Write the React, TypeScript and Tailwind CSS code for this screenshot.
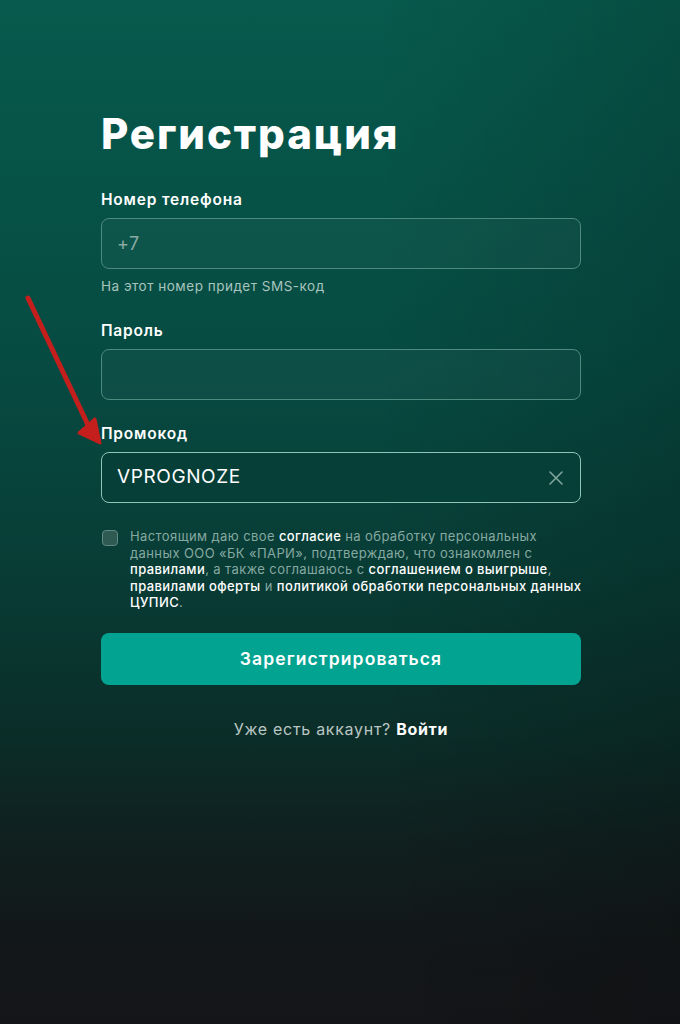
import React, { useState } from "react";

const font = { fontFamily: "Inter, 'Noto Sans', sans-serif" };

const Field = ({
    label,
    children,
    active,
}: {
    label: string;
    children?: React.ReactNode;
    active?: boolean;
}) => (
    <div className="flex flex-col">
        <p className="text-[15.5px] font-semibold text-white leading-[20px] tracking-[0.8px] mb-[8px]">{label}</p>
        <div
            className={`h-[51px] rounded-[8px] border flex items-center px-[15px] ${
                active ? "border-[#8fc4b8] bg-[#063e38]" : "border-[#4f8a7e] bg-white/[0.03]"
            }`}
        >
            {children}
        </div>
    </div>
);

const B = ({ children }: { children: React.ReactNode }) => (
    <span className="text-white font-medium">{children}</span>
);

export default function App() {
    const [checked, setChecked] = useState(false);

    return (
        <div
            className="relative w-[680px] h-[1024px] overflow-hidden bg-[linear-gradient(180deg,#075a4d_0%,#064b42_35%,#083d36_55%,#0b2d28_72%,#10201f_82%,#131719_92%,#141518_100%)]"
            style={font}
        >
            <div className="absolute inset-0 bg-[linear-gradient(90deg,rgba(0,0,0,0)_0%,rgba(0,0,0,0)_55%,rgba(0,0,0,0.15)_100%)]" />

            <div className="relative w-[480px] ml-[101px] pt-[108px] flex flex-col">
                <h1 className="text-[42px] font-extrabold text-white leading-[52px] tracking-[1.9px] mb-[30px]">
                    Регистрация
                </h1>

                <Field label="Номер телефона">
                    <span className="text-[18px] text-[#8aa9a2] tracking-[0.5px]">+7</span>
                </Field>
                <p className="text-[13.5px] text-[#a9c4bd] mt-[8px] leading-[18px] tracking-[0.5px]">
                    На этот номер придет SMS-код
                </p>

                <div className="mt-[26px]">
                    <Field label="Пароль" />
                </div>

                <div className="mt-[24px]">
                    <Field label="Промокод" active>
                        <span className="text-[19px] text-white flex-1 tracking-[0.6px]">VPROGNOZE</span>
                        <svg width="16" height="16" viewBox="0 0 16 16" className="mr-[1px]">
                            <path d="M2 2L14 14M14 2L2 14" stroke="#7fa59c" strokeWidth="1.6" strokeLinecap="round" />
                        </svg>
                    </Field>
                </div>

                <div className="flex gap-[12px] mt-[25px]">
                    <button
                        onClick={() => setChecked(!checked)}
                        className={`w-[16px] h-[16px] shrink-0 rounded-[4px] border border-[#5e8a82] mt-[2px] ml-[1px] ${
                            checked ? "bg-[#00a08c]" : "bg-[#2f5a54]"
                        }`}
                    />
                    <p className="text-[13px] leading-[16.6px] tracking-[0.4px] text-[#86a9a1] whitespace-nowrap">
                        Настоящим даю свое <B>согласие</B> на обработку персональных
                        <br />
                        данных ООО «БК «ПАРИ», подтверждаю, что ознакомлен с
                        <br />
                        <B>правилами</B>, а также соглашаюсь с <B>соглашением о выигрыше</B>,
                        <br />
                        <B>правилами оферты</B> и <B>политикой обработки персональных данных</B>
                        <br />
                        <B>ЦУПИС</B>.
                    </p>
                </div>

                <button className="mt-[22px] h-[52px] rounded-[8px] bg-[#03a391] text-white text-[17.5px] font-semibold tracking-[1.1px]">
                    Зарегистрироваться
                </button>

                <p className="text-center text-[16px] mt-[32px] text-[#b9c6c3] tracking-[0.7px]">
                    Уже есть аккаунт? <span className="text-white font-bold">Войти</span>
                </p>
            </div>

            <svg className="absolute left-0 top-0" width="140" height="460" viewBox="0 0 140 460">
                <path d="M28 298 L88 425" stroke="#c41f1d" strokeWidth="5" strokeLinecap="round" />
                <path d="M100 443 L79 433 L95 419 Z" fill="#c41f1d" stroke="#c41f1d" strokeWidth="3" strokeLinejoin="round" />
            </svg>
        </div>
    );
}
